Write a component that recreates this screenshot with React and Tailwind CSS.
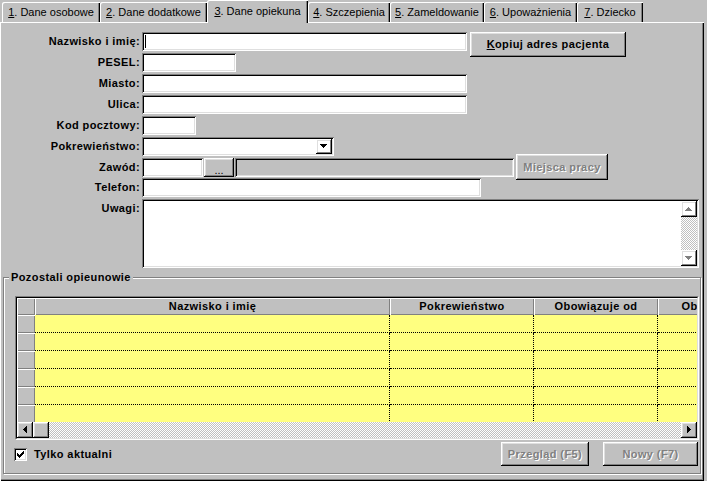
const RAISED =
  "shadow-[inset_-1px_-1px_0_#000,inset_1px_1px_0_#fff,inset_-2px_-2px_0_#808080,inset_2px_2px_0_#dfdfdf]";
const SUNKEN =
  "shadow-[inset_1px_1px_0_#808080,inset_-1px_-1px_0_#fff,inset_2px_2px_0_#000,inset_-2px_-2px_0_#dfdfdf]";
const DITHER =
  "bg-[image:repeating-conic-gradient(#fff_0_25%,#c0c0c0_0_50%)] bg-[length:2px_2px]";
const DISABLED = "text-[#808080] [text-shadow:1px_1px_0_#fff]";
const HEAD = "bg-[#c0c0c0] shadow-[inset_1px_1px_0_#fff,inset_-1px_-1px_0_#808080]";
const TAB = "shadow-[inset_1px_1px_0_#fff,inset_-1px_0_0_#000,inset_-2px_0_0_#808080]";
const BOLD = "font-bold tracking-[0.4px]";

const tabs = [
  { n: "1", label: ". Dane osobowe", w: "w-[98px]" },
  { n: "2", label: ". Dane dodatkowe", w: "w-[107px]" },
  { n: "3", label: ". Dane opiekuna", w: "w-[101px]", active: true },
  { n: "4", label: ". Szczepienia", w: "w-[82px]" },
  { n: "5", label: ". Zameldowanie", w: "w-[94px]" },
  { n: "6", label: ". Upoważnienia", w: "w-[93px]" },
  { n: "7", label: ". Dziecko", w: "w-[66px]" },
];

// strzałki jak w Win95 (piksel po pikselu)
function Arrow({ dir, disabled }) {
  const paths = {
    down: { w: 7, h: 4, d: "M0 0h7v1H0zM1 1h5v1H1zM2 2h3v1H2zM3 3h1v1H3z" },
    up: { w: 7, h: 4, d: "M3 0h1v1H3zM2 1h3v1H2zM1 2h5v1H1zM0 3h7v1H0z" },
    left: { w: 4, h: 7, d: "M3 0h1v7H3zM2 1h1v5H2zM1 2h1v3H1zM0 3h1v1H0z" },
    right: { w: 4, h: 7, d: "M0 0h1v7H0zM1 1h1v5H1zM2 2h1v3H2zM3 3h1v1H3z" },
  };
  const p = paths[dir];
  return (
    <svg width={p.w + 1} height={p.h + 1} viewBox={`0 0 ${p.w + 1} ${p.h + 1}`}>
      {disabled && <path d={p.d} fill="#fff" transform="translate(1 1)" />}
      <path d={p.d} fill={disabled ? "#808080" : "#000"} />
    </svg>
  );
}

function Field({ w, children, className = "" }) {
  return <div className={`${w} h-[19px] bg-white ${SUNKEN} ${className}`}>{children}</div>;
}

function Row({ label, children, mb = "mb-[2px]", h = "h-[19px]", top }) {
  return (
    <div className={`flex ${h} ${mb} ${top ? "items-start" : "items-center"}`}>
      <div className={`w-[142px] pr-[2px] text-right ${BOLD} ${top ? "pt-[3px]" : ""}`}>
        {label}
      </div>
      {children}
    </div>
  );
}

function GridRow({ last }) {
  const line = last ? "" : "border-b border-dotted border-black";
  return (
    <div className="flex h-[18px] shrink-0">
      <div className={`w-[18px] shrink-0 ${HEAD}`} />
      <div className={`w-[355px] shrink-0 bg-[#ffff80] border-r border-dotted border-black ${line}`} />
      <div className={`w-[144px] shrink-0 bg-[#ffff80] border-r border-dotted border-black ${line}`} />
      <div className={`w-[124px] shrink-0 bg-[#ffff80] border-r border-dotted border-black ${line}`} />
      <div className={`w-[130px] shrink-0 bg-[#ffff80] ${line}`} />
    </div>
  );
}

export default function App() {
  return (
    <div className="w-[707px] h-[481px] bg-[#c0c0c0] overflow-hidden font-['Liberation_Sans',Arial,sans-serif] text-[11px] leading-[13px] text-black">
      {/* zakładki */}
      <div className="flex items-end h-[22px] pl-[2px]">
        {tabs.map((t) =>
          t.active ? (
            <div
              key={t.n}
              className={`${t.w} h-[23px] -mb-[1px] relative z-10 bg-[#c0c0c0] rounded-tl-[2px] flex items-center justify-center pb-[1px] ${TAB}`}
            >
              <span className="underline">{t.n}</span>
              {t.label}
            </div>
          ) : (
            <div
              key={t.n}
              className={`${t.w} h-[20px] rounded-tl-[2px] flex items-center justify-center pt-[1px] ${TAB}`}
            >
              <span className="underline">{t.n}</span>
              {t.label}
            </div>
          )
        )}
      </div>

      {/* panel */}
      <div className="w-[704px] h-[459px] pt-[10px] flex flex-col shadow-[inset_1px_1px_0_#fff,inset_-1px_-1px_0_#000,inset_-2px_-2px_0_#808080]">
        <Row label="Nazwisko i imię:">
          <Field w="w-[325px]" className="flex items-center">
            <div className="w-px h-[13px] bg-black ml-[3px]" />
          </Field>
          <button
            className={`self-start ml-[3px] w-[156px] h-[25px] shrink-0 pb-[1px] ${BOLD} ${RAISED}`}
          >
            <span className="underline">K</span>opiuj adres pacjenta
          </button>
        </Row>
        <Row label="PESEL:">
          <Field w="w-[94px]" />
        </Row>
        <Row label="Miasto:">
          <Field w="w-[325px]" />
        </Row>
        <Row label="Ulica:">
          <Field w="w-[325px]" />
        </Row>
        <Row label="Kod pocztowy:">
          <Field w="w-[54px]" />
        </Row>
        <Row label="Pokrewieństwo:">
          <Field w="w-[192px]" className="flex justify-end p-[2px]">
            <div className={`w-[16px] h-full flex items-center justify-center ${RAISED}`}>
              <Arrow dir="down" />
            </div>
          </Field>
        </Row>
        <Row label="Zawód:" mb="mb-[1px]">
          <Field w="w-[61px]" />
          <div
            className={`ml-[1px] w-[30px] h-[19px] flex items-end justify-center pb-[2px] leading-[10px] ${RAISED}`}
          >
            ...
          </div>
          <div className={`ml-[1px] w-[279px] h-[19px] bg-[#c0c0c0] ${SUNKEN}`} />
          <button
            className={`self-start -mt-[4px] ml-[2px] w-[92px] h-[26px] shrink-0 ${BOLD} ${RAISED} ${DISABLED}`}
          >
            Miejsca pracy
          </button>
        </Row>
        <Row label="Telefon:">
          <Field w="w-[339px]" />
        </Row>
        <Row label="Uwagi:" h="h-[69px]" mb="mb-0" top>
          <div className={`w-[557px] h-[69px] bg-white flex justify-end p-[2px] ${SUNKEN}`}>
            <div className="w-[16px] h-full flex flex-col">
              <div className={`h-[16px] flex items-center justify-center ${RAISED}`}>
                <Arrow dir="up" disabled />
              </div>
              <div className={`flex-1 ${DITHER}`} />
              <div className={`h-[16px] flex items-center justify-center ${RAISED}`}>
                <Arrow dir="down" disabled />
              </div>
            </div>
          </div>
        </Row>

        {/* grupa: pozostali opiekunowie */}
        <div className="mt-[9px] ml-[3px] w-[698px] h-[197px] flex flex-col border border-[#808080] shadow-[inset_1px_1px_0_#fff,1px_1px_0_#fff]">
          <div className={`self-start -mt-[8px] ml-[5px] px-[2px] bg-[#c0c0c0] leading-[14px] ${BOLD}`}>
            Pozostali opieunowie
          </div>

          <div className="mt-[12px] ml-[11px] w-[684px] h-[144px] border border-t-[#808080] border-l-[#808080] border-b-white border-r-white">
            <div className="w-full h-full border border-black border-b-[#dfdfdf] border-r-[#dfdfdf] overflow-hidden flex flex-col">
              <div className={`flex h-[17px] shrink-0 ${BOLD}`}>
                <div className={`w-[18px] shrink-0 ${HEAD}`} />
                <div className={`w-[355px] shrink-0 flex items-center justify-center ${HEAD}`}>
                  Nazwisko i imię
                </div>
                <div className={`w-[144px] shrink-0 flex items-center justify-center ${HEAD}`}>
                  Pokrewieństwo
                </div>
                <div className={`w-[124px] shrink-0 flex items-center justify-center ${HEAD}`}>
                  Obowiązuje od
                </div>
                <div className={`w-[130px] shrink-0 flex items-center justify-center whitespace-nowrap ${HEAD}`}>
                  Obowiązuje do
                </div>
              </div>
              <GridRow />
              <GridRow />
              <GridRow />
              <GridRow />
              <GridRow />
              <div className="h-[17px] shrink-0 flex flex-col">
                <GridRow last />
              </div>
              <div className="h-[16px] shrink-0 flex">
                <div className={`w-[16px] flex items-center justify-center ${RAISED}`}>
                  <Arrow dir="left" />
                </div>
                <div className={`w-[16px] ${RAISED}`} />
                <div className={`flex-1 ${DITHER}`} />
                <div className={`w-[16px] flex items-center justify-center ${RAISED}`}>
                  <Arrow dir="right" />
                </div>
              </div>
            </div>
          </div>

          <div className="flex items-center h-[24px] mt-[2px]">
            <div className={`ml-[10px] w-[13px] h-[13px] bg-white flex items-center justify-center ${SUNKEN}`}>
              <svg width="7" height="7" viewBox="0 0 7 7">
                <path d="M0 2h1v3H0zM1 3h1v3H1zM2 4h1v3H2zM3 3h1v3H3zM4 2h1v3H4zM5 1h1v3H5zM6 0h1v3H6z" fill="#000" />
              </svg>
            </div>
            <span className={`ml-[7px] ${BOLD}`}>Tylko aktualni</span>
            <div className="flex-1" />
            <button className={`w-[88px] h-[24px] ${BOLD} ${RAISED} ${DISABLED}`}>Przegląd (F5)</button>
            <button className={`ml-[14px] mr-[2px] w-[95px] h-[24px] ${BOLD} ${RAISED} ${DISABLED}`}>
              Nowy (F7)
            </button>
          </div>
        </div>
      </div>
    </div>
  );
}
